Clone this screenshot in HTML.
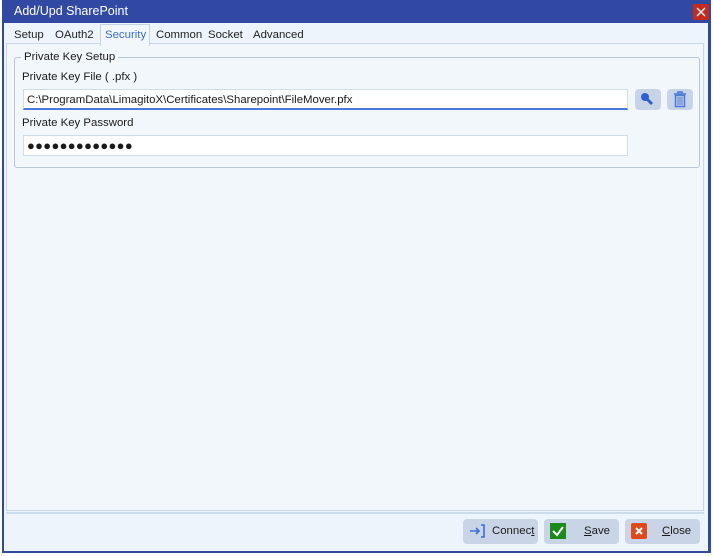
<!DOCTYPE html>
<html><head><meta charset="utf-8"><style>
*{margin:0;padding:0;box-sizing:border-box}
body{width:713px;height:556px;background:#fff;font-family:"Liberation Sans",sans-serif;font-size:11.4px;color:#1a1a1a;position:relative;overflow:hidden}
.win{position:absolute;left:2px;top:0;width:709px;height:553px;background:#3249a3;}
.title{position:absolute;left:12px;top:4px;color:#fff;font-size:12.5px}
.xbtn{position:absolute;left:691px;top:4px;width:16px;height:16px;background:#c42b1c;border-radius:2px}
.client{position:absolute;left:2px;top:23px;width:704px;height:528px;background:#eef4fb}
.tab{position:absolute;top:11px;color:#222}
.tabsel{position:absolute;left:96px;top:1px;width:50px;height:22px;border:1px solid #c5d3e6;border-bottom:none;background:#f2f7fc;color:#3a6fd0;padding:4px 0 0 4px}
.panel{position:absolute;left:2px;top:20px;width:698px;height:468px;background:#f2f7fc;border:1px solid #c9d7e8}
.group{position:absolute;left:7px;top:13px;width:686px;height:111px;border:1px solid #b9c6d6;border-radius:3px}
.glabel{position:absolute;left:6px;top:-7px;background:#f2f7fc;padding:0 3px}
.lbl{position:absolute}
.inp{position:absolute;background:#fff;border:1px solid #cfdbe8;height:21px;padding:4px 0 0 3px}
.ib{position:absolute;width:26px;height:21px;background:#c7d3e6;border-radius:4px}
.bbar{position:absolute;left:2px;top:489px;width:698px;height:36px;background:#eef4fb;border-top:2px solid #cbdcee}
.btn{position:absolute;top:5px;height:25px;background:#c9d4e6;border-radius:4px}
.btn span{position:absolute;top:6px}
</style></head><body>
<div class="win">
<div class="title">Add/Upd SharePoint</div>
<div class="xbtn"><svg width="16" height="16"><path d="M4 4L12 12M12 4L4 12" stroke="#fff" stroke-width="1.3"/></svg></div>
<div class="client">
<div class="tab" style="left:10px;top:6px">Setup</div>
<div class="tab" style="left:51px;top:6px">OAuth2</div>
<div class="panel">
<div class="group">
<div class="glabel">Private Key Setup</div>
<div class="lbl" style="left:7px;top:13px">Private Key File ( .pfx )</div>
<div class="inp" style="left:8px;top:31px;width:605px;border-bottom:2px solid #4a78e0">C:\ProgramData\LimagitoX\Certificates\Sharepoint\FileMover.pfx</div>
<div class="ib" style="left:620px;top:31px"><svg width="26" height="21"><circle cx="10" cy="8" r="4" fill="#2f5fd0"/><path d="M12 10L17 15" stroke="#2f5fd0" stroke-width="3"/></svg></div>
<div class="ib" style="left:652px;top:31px"><svg width="26" height="21"><path d="M7 5H19M11 5V3H15V5" stroke="#4d78d8" stroke-width="1.5" fill="none"/><rect x="8.5" y="6.5" width="9" height="11" fill="none" stroke="#4d78d8" stroke-width="1.5"/><path d="M11 8V16M13 8V16M15 8V16" stroke="#4d78d8"/></svg></div>
<div class="lbl" style="left:7px;top:59px">Private Key Password</div>
<div class="inp" style="left:8px;top:77px;width:605px;font-size:13px;padding-top:2px;letter-spacing:0.3px">●●●●●●●●●●●●●</div>
</div>
</div>
<div class="tabsel">Security</div>
<div class="tab" style="left:152px;top:6px">Common</div>
<div class="tab" style="left:204px;top:6px">Socket</div>
<div class="tab" style="left:249px;top:6px">Advanced</div>
<div class="bbar">
<div class="btn" style="left:457px;width:75px"><svg style="position:absolute;left:6px;top:5px" width="16" height="14"><path d="M1 7H10M7 4L10 7L7 10M12 1H15V13H12" stroke="#3a6fd8" stroke-width="1.6" fill="none"/></svg><span style="left:29px">Connec<u>t</u></span></div>
<div class="btn" style="left:538px;width:75px"><svg style="position:absolute;left:6px;top:4px" width="16" height="16"><rect width="16" height="16" fill="#1a8a1a"/><path d="M3 8L7 12L13 4" stroke="#fff" stroke-width="2" fill="none"/></svg><span style="left:40px"><u>S</u>ave</span></div>
<div class="btn" style="left:619px;width:75px"><svg style="position:absolute;left:6px;top:4px" width="16" height="16"><rect width="16" height="16" rx="2" fill="#e04a1a"/><path d="M5 5L11 11M11 5L5 11" stroke="#fff" stroke-width="2"/></svg><span style="left:37px"><u>C</u>lose</span></div>
</div>
</div>
</div>
</body></html>
